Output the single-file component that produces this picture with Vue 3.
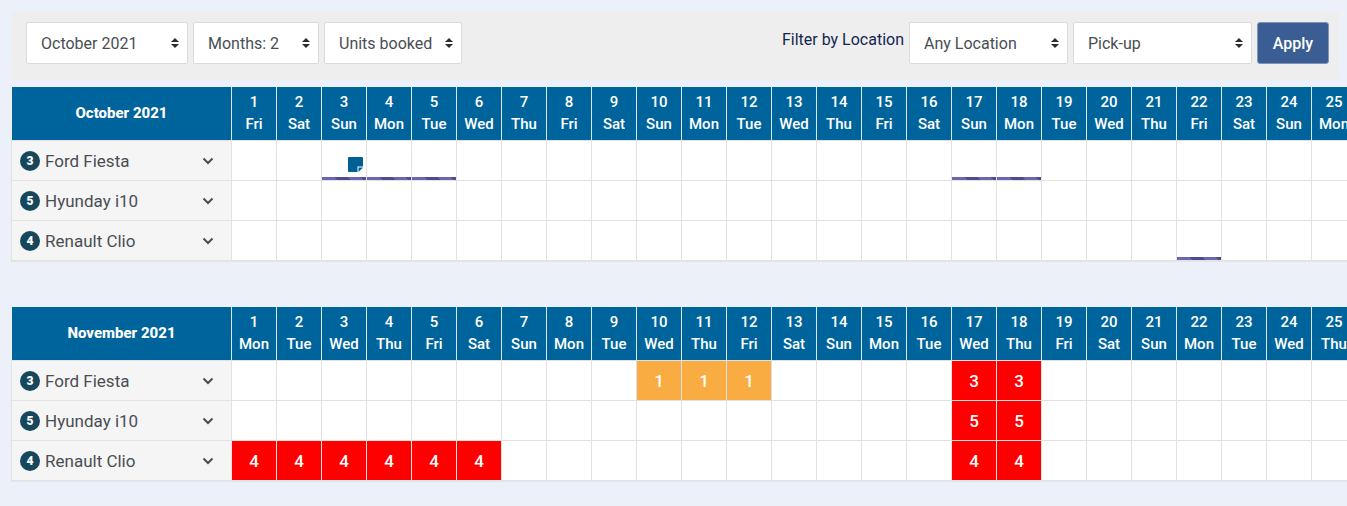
<script setup>
import { ref } from 'vue'

const period = ref('October 2021')
const span = ref('Months: 2')
const view = ref('Units booked')
const place = ref('Any Location')
const stage = ref('Pick-up')

const weekdays = ['Sun', 'Mon', 'Tue', 'Wed', 'Thu', 'Fri', 'Sat']

function buildDays(count, firstWeekday) {
  return Array.from({ length: count }, (_, i) => ({
    number: i + 1,
    weekday: weekdays[(firstWeekday + i) % 7],
  }))
}

const months = [
  {
    title: 'October 2021',
    days: buildDays(31, 5),
    cars: [
      { units: 3, name: 'Ford Fiesta', shared: [3, 4, 5, 17, 18], notes: [3] },
      { units: 5, name: 'Hyunday i10' },
      { units: 4, name: 'Renault Clio', shared: [22] },
    ],
  },
  {
    title: 'November 2021',
    days: buildDays(30, 1),
    cars: [
      { units: 3, name: 'Ford Fiesta', booked: { 10: 1, 11: 1, 12: 1, 17: 3, 18: 3 } },
      { units: 5, name: 'Hyunday i10', booked: { 17: 5, 18: 5 } },
      { units: 4, name: 'Renault Clio', booked: { 1: 4, 2: 4, 3: 4, 4: 4, 5: 4, 6: 4, 17: 4, 18: 4 } },
    ],
  },
]

function cellClass(car, day) {
  const count = car.booked?.[day]
  return {
    full: count === car.units,
    partial: count > 0 && count < car.units,
    shared: car.shared?.includes(day),
  }
}
</script>

<template>
  <main class="page">
    <form class="toolbar" @submit.prevent>
      <div class="group">
        <div class="picker w-period">
          <select v-model="period" aria-label="Month"><option>October 2021</option><option>November 2021</option></select>
          <svg viewBox="0 0 8 10"><path d="M4 0 8 4H0zM0 6h8L4 10z" /></svg>
        </div>
        <div class="picker w-span">
          <select v-model="span" aria-label="Number of months"><option>Months: 1</option><option>Months: 2</option><option>Months: 3</option></select>
          <svg viewBox="0 0 8 10"><path d="M4 0 8 4H0zM0 6h8L4 10z" /></svg>
        </div>
        <div class="picker w-view">
          <select v-model="view" aria-label="Display"><option>Units booked</option><option>Units left</option></select>
          <svg viewBox="0 0 8 10"><path d="M4 0 8 4H0zM0 6h8L4 10z" /></svg>
        </div>
      </div>
      <div class="group">
        <label class="caption" for="place">Filter by Location</label>
        <div class="picker w-place">
          <select id="place" v-model="place"><option>Any Location</option></select>
          <svg viewBox="0 0 8 10"><path d="M4 0 8 4H0zM0 6h8L4 10z" /></svg>
        </div>
        <div class="picker w-stage">
          <select v-model="stage" aria-label="Location type"><option>Pick-up</option><option>Drop-off</option></select>
          <svg viewBox="0 0 8 10"><path d="M4 0 8 4H0zM0 6h8L4 10z" /></svg>
        </div>
        <button class="apply" type="submit">Apply</button>
      </div>
    </form>

    <div class="months">
      <table v-for="month in months" :key="month.title" class="calendar">
        <thead>
          <tr>
            <th class="title" scope="col">{{ month.title }}</th>
            <th v-for="day in month.days" :key="day.number" class="day" scope="col">
              <span>{{ day.number }}</span>
              <span>{{ day.weekday }}</span>
            </th>
          </tr>
        </thead>
        <tbody>
          <tr v-for="car in month.cars" :key="car.name">
            <th class="car" scope="row">
              <div class="car-row">
                <span class="units">{{ car.units }}</span>
                <span class="name">{{ car.name }}</span>
                <button class="toggle" type="button" :aria-label="'Expand ' + car.name">
                  <svg viewBox="0 0 12 8"><path d="M1.500 1.500 6 6l4.500-4.500" /></svg>
                </button>
              </div>
            </th>
            <td v-for="day in month.days" :key="day.number" :class="cellClass(car, day.number)">
              <template v-if="car.booked?.[day.number]">{{ car.booked[day.number] }}</template>
              <svg v-if="car.notes?.includes(day.number)" class="note" viewBox="0 0 15 15">
                <path d="M1 0h13q1 0 1 1v8.500H9.500V15H1q-1 0-1-1V1q0-1 1-1zM10.500 10.500H15L10.500 15z" />
              </svg>
            </td>
          </tr>
        </tbody>
      </table>
    </div>
  </main>
</template>

<style>
body {
  margin: 0;
  background: #ecf1f9;
}
</style>

<style scoped>
.page {
  padding: 12px 0 24px 11px;
  font-family: Roboto, "Liberation Sans", sans-serif;
  font-size: 16px;
  color: #494e54;
}
.toolbar {
  display: flex;
  justify-content: space-between;
  margin: 0 8px 8px 1px;
  padding: 10px 10px 15px 14px;
  background: #eee;
}
.group {
  display: flex;
  gap: 5px;
}
.caption {
  padding-top: 8px;
  line-height: 20px;
  color: #142650;
}
.picker {
  position: relative;
}
.picker svg {
  position: absolute;
  top: 16px;
  right: 9px;
  width: 8px;
  height: 10px;
  fill: #292e33;
  pointer-events: none;
}
.picker select {
  appearance: none;
  box-sizing: border-box;
  width: 100%;
  height: 42px;
  padding: 0 14px;
  border: 1px solid #dbdbdb;
  border-radius: 2px;
  background: #fff;
  color: inherit;
  font: inherit;
}
.w-period { width: 162px; }
.w-span { width: 126px; }
.w-view { width: 138px; }
.w-place { width: 159px; }
.w-stage { width: 179px; }
.w-view select { padding-right: 0; }
.apply {
  box-sizing: border-box;
  width: 72px;
  height: 42px;
  padding: 0;
  border: 1px solid #8095b8;
  border-radius: 3px;
  background: #3a5e93;
  color: #fff;
  font: 500 16px Roboto, "Liberation Sans", sans-serif;
}
.months {
  display: flex;
  flex-direction: column;
  align-items: flex-start;
  gap: 45px;
  overflow-x: auto;
  scrollbar-width: none;
}
.calendar {
  flex-shrink: 0;
  table-layout: fixed;
  width: max-content;
  border-spacing: 0;
  border-bottom: 1px solid #e2e5e9;
}
th,
td {
  box-sizing: border-box;
  padding: 0;
  border-right: 1px solid #e2e2e2;
  border-bottom: 1px solid #e2e2e2;
}
.title,
.day {
  height: 54px;
  padding-bottom: 2px;
  background: #00649c;
  color: #fff;
  border-right-color: #dce8f0;
}
.title {
  width: 221px;
  border-left: 1px solid #ecf1f9;
  font-size: 15px;
  font-weight: 800;
}
.day {
  width: 45px;
  min-width: 45px;
  font-size: 15px;
  font-weight: 500;
  line-height: 22px;
}
.day span {
  display: block;
}
.car {
  border-left: 1px solid #e2e2e2;
  background: #f5f5f5;
  font-weight: 400;
}
.car-row {
  display: flex;
  align-items: center;
  padding: 0 17px 0 8px;
}
.units {
  width: 20px;
  margin-right: 5px;
  border-radius: 50%;
  background: #17475c;
  color: #fff;
  font-size: 12px;
  font-weight: 900;
  line-height: 20px;
  text-align: center;
}
.name {
  flex: 1;
  font-size: 17px;
  text-align: left;
}
.toggle {
  display: flex;
  padding: 0;
  border: 0;
  background: none;
}
.toggle svg {
  width: 12px;
  height: 8px;
  fill: none;
  stroke: #494e54;
  stroke-width: 2px;
}
td {
  position: relative;
  height: 40px;
  background: #fff;
  color: #fff;
  font-size: 17px;
  font-weight: 500;
  text-align: center;
}
td.full {
  background: #f00;
}
td.partial {
  background: #f8ac42;
}
td.shared::after {
  content: "";
  position: absolute;
  right: 0;
  bottom: 0;
  left: 0;
  height: 3px;
  background: linear-gradient(45deg, #6b66b2 0 33%, #504b8d 33% 60%, #6b66b2 60% 88%, #504b8d 88%);
}
.note {
  position: absolute;
  right: 3px;
  bottom: 8px;
  width: 15px;
  height: 15px;
  fill: #005f94;
}
</style>
